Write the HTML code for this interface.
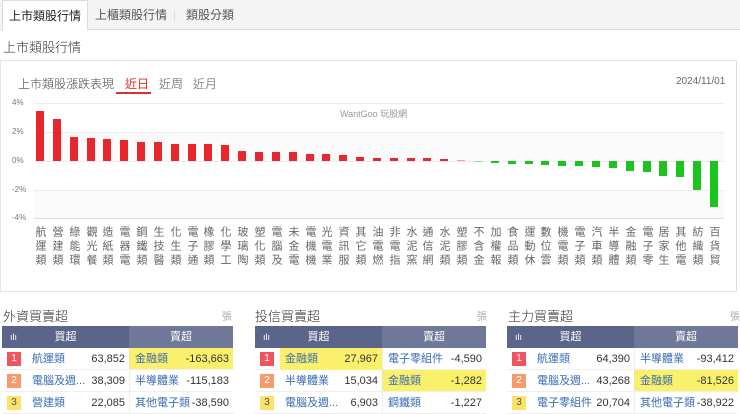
<!DOCTYPE html>
<html><head><meta charset="utf-8"><style>
*{margin:0;padding:0;box-sizing:border-box}
body{width:740px;height:409px;overflow:hidden;background:#fff;font-family:"Liberation Sans","Noto Sans CJK TC",sans-serif;color:#333;position:relative}
.a{position:absolute}
.tabs{left:0;top:0;width:740px;height:30px;background:#f4f4f4;border-bottom:1px solid #ddd}
.tab{top:0;height:30px;line-height:30px;font-size:12px;color:#555;text-align:center}
.b{position:absolute;width:8px}
.r{background:#e8262d}.g{background:#1ec41e}
.l{position:absolute;top:226px;width:14px;height:46px;overflow:hidden;writing-mode:vertical-rl;font-size:11px;line-height:14px;color:#666;letter-spacing:3px}
.grid{position:absolute;left:34px;width:690px;height:1px;background:#ececec}
.yl{position:absolute;left:12px;font-size:8px;color:#777;width:18px}
.tt{font-size:13px;color:#333;font-weight:300}
.tbl{position:absolute;top:326px;width:231px;font-size:11px}
.hd{height:22px;display:flex;color:#fff}
.hd .h1{width:127px;background:#5b6489;position:relative;text-align:center;line-height:22px}
.hd .h2{flex:1;background:#6f7899;text-align:center;line-height:22px}
.row{height:22px;display:flex;line-height:22px;border-bottom:1px solid #f0f0f0}
.bl{width:127px;position:relative}
.br{flex:1;position:relative;border-left:1px dotted #ddd}
.bd{position:absolute;left:5px;top:4px;width:14px;height:14px;line-height:14px;text-align:center;color:#fff;font-size:10px}
.nm{position:absolute;left:30px;color:#3a6db3}
.nu{position:absolute;right:4px;color:#333}
.nm2{position:absolute;left:5px;color:#3a6db3}
.y{background:#fbf06b}
</style></head><body>
<div class="a tabs"></div>
<div class="a tab" style="left:2px;width:86px;background:#fff;border:1px solid #ddd;border-bottom:none;height:31px;color:#222">上市類股行情</div>
<div class="a tab" style="left:92px;width:78px">上櫃類股行情</div>
<div class="a" style="left:174px;top:11px;width:1px;height:10px;background:#ddd"></div>
<div class="a tab" style="left:180px;width:60px">類股分類</div>
<div class="a tt" style="left:3px;top:37px;font-size:13px">上市類股行情</div>
<div class="a" style="left:0;top:60px;width:737px;height:232px;border:1px solid #e6e6e6;border-right:1px solid #ddd"></div>
<div class="a" style="left:18px;top:75px;font-size:12px;color:#444;font-weight:300">上市類股漲跌表現</div>
<div class="a" style="left:125px;top:75px;font-size:12px;color:#e02a2a">近日</div>
<div class="a" style="left:116px;top:92px;width:35px;height:2px;background:#d93030"></div>
<div class="a" style="left:159px;top:75px;font-size:12px;color:#555;font-weight:300">近周</div>
<div class="a" style="left:193px;top:75px;font-size:12px;color:#555;font-weight:300">近月</div>
<div class="a" style="left:676px;top:76px;font-size:10px;color:#666">2024/11/01</div>
<div class="a" style="left:34px;top:132px;width:690px;height:29px;background:#fafafa"></div>
<div class="a" style="left:34px;top:190px;width:690px;height:28px;background:#fafafa"></div>
<div class="grid" style="top:103px"></div><div class="grid" style="top:132px"></div><div class="grid" style="top:161px"></div><div class="grid" style="top:190px"></div><div class="grid" style="top:218px;background:#ddd"></div>
<div class="yl" style="top:98px">4%</div><div class="yl" style="top:127px">2%</div><div class="yl" style="top:156px">0%</div><div class="yl" style="top:185px">-2%</div><div class="yl" style="top:213px">-4%</div>
<div class="a" style="left:340px;top:107px;font-size:9px;color:#999">WantGoo 玩股網</div>
<div class="b r" style="left:36px;top:111px;height:50px"></div>
<div class="b r" style="left:53px;top:119px;height:42px"></div>
<div class="b r" style="left:70px;top:137px;height:24px"></div>
<div class="b r" style="left:87px;top:138px;height:23px"></div>
<div class="b r" style="left:103px;top:139px;height:22px"></div>
<div class="b r" style="left:120px;top:140px;height:21px"></div>
<div class="b r" style="left:137px;top:142px;height:19px"></div>
<div class="b r" style="left:154px;top:142px;height:19px"></div>
<div class="b r" style="left:171px;top:144px;height:17px"></div>
<div class="b r" style="left:188px;top:144px;height:17px"></div>
<div class="b r" style="left:204px;top:144px;height:17px"></div>
<div class="b r" style="left:221px;top:145px;height:16px"></div>
<div class="b r" style="left:238px;top:151px;height:10px"></div>
<div class="b r" style="left:255px;top:152px;height:9px"></div>
<div class="b r" style="left:272px;top:152px;height:9px"></div>
<div class="b r" style="left:289px;top:152px;height:9px"></div>
<div class="b r" style="left:306px;top:154px;height:7px"></div>
<div class="b r" style="left:322px;top:154px;height:7px"></div>
<div class="b r" style="left:339px;top:155px;height:6px"></div>
<div class="b r" style="left:356px;top:157px;height:4px"></div>
<div class="b r" style="left:373px;top:158px;height:3px"></div>
<div class="b r" style="left:390px;top:158px;height:3px"></div>
<div class="b r" style="left:407px;top:158px;height:3px"></div>
<div class="b r" style="left:423px;top:158px;height:3px"></div>
<div class="b r" style="left:440px;top:159px;height:2px"></div>
<div class="b" style="left:457px;top:160px;height:1px;background:#f3a0a0"></div>
<div class="b" style="left:474px;top:161px;height:1px;background:#8fe08f"></div>
<div class="b g" style="left:491px;top:161px;height:1.5px"></div>
<div class="b g" style="left:508px;top:161px;height:3px"></div>
<div class="b g" style="left:525px;top:161px;height:3px"></div>
<div class="b g" style="left:541px;top:161px;height:4px"></div>
<div class="b g" style="left:558px;top:161px;height:5px"></div>
<div class="b g" style="left:575px;top:161px;height:5px"></div>
<div class="b g" style="left:592px;top:161px;height:6px"></div>
<div class="b g" style="left:609px;top:161px;height:7px"></div>
<div class="b g" style="left:626px;top:161px;height:10px"></div>
<div class="b g" style="left:643px;top:161px;height:11px"></div>
<div class="b g" style="left:659px;top:161px;height:15px"></div>
<div class="b g" style="left:676px;top:161px;height:16px"></div>
<div class="b g" style="left:693px;top:161px;height:29px"></div>
<div class="b g" style="left:710px;top:161px;height:46px"></div>
<div class="l" style="left:33px">航運類</div>
<div class="l" style="left:50px">營建類</div>
<div class="l" style="left:67px">綠能環保</div>
<div class="l" style="left:84px">觀光餐旅</div>
<div class="l" style="left:100px">造紙類</div>
<div class="l" style="left:117px">電器電纜</div>
<div class="l" style="left:134px">鋼鐵類</div>
<div class="l" style="left:151px">生技醫療業</div>
<div class="l" style="left:168px">化生類</div>
<div class="l" style="left:185px">電子通路類</div>
<div class="l" style="left:201px">橡膠類</div>
<div class="l" style="left:218px">化學工業</div>
<div class="l" style="left:235px">玻璃陶瓷</div>
<div class="l" style="left:252px">塑化類</div>
<div class="l" style="left:269px">電腦及週邊設</div>
<div class="l" style="left:286px">未金電</div>
<div class="l" style="left:303px">電機機械</div>
<div class="l" style="left:319px">光電業</div>
<div class="l" style="left:336px">資訊服務類</div>
<div class="l" style="left:353px">其它類</div>
<div class="l" style="left:370px">油電燃氣類</div>
<div class="l" style="left:387px">非電指</div>
<div class="l" style="left:404px">水泥窯類</div>
<div class="l" style="left:420px">通信網路業</div>
<div class="l" style="left:437px">水泥類</div>
<div class="l" style="left:454px">塑膠類</div>
<div class="l" style="left:471px">不含金融</div>
<div class="l" style="left:488px">加權報酬指</div>
<div class="l" style="left:505px">食品類</div>
<div class="l" style="left:522px">運動休閒</div>
<div class="l" style="left:538px">數位雲端</div>
<div class="l" style="left:555px">機電類</div>
<div class="l" style="left:572px">電子類</div>
<div class="l" style="left:589px">汽車類</div>
<div class="l" style="left:606px">半導體業</div>
<div class="l" style="left:623px">金融類</div>
<div class="l" style="left:640px">電子零組件</div>
<div class="l" style="left:656px">居家生活</div>
<div class="l" style="left:673px">其他電子類</div>
<div class="l" style="left:690px">紡織類</div>
<div class="l" style="left:707px">百貨貿易</div>

<div class="a tt" style="left:3px;top:306px">外資買賣超</div><div class="a" style="left:222px;top:308px;font-size:10px;color:#aaa">張</div>
<div class="a tt" style="left:255px;top:306px">投信買賣超</div><div class="a" style="left:477px;top:308px;font-size:10px;color:#aaa">張</div>
<div class="a tt" style="left:508px;top:306px">主力買賣超</div><div class="a" style="left:730px;top:308px;font-size:10px;color:#aaa">張</div>

<div class="tbl" style="left:2px">
<div class="hd"><div class="h1"><span style="position:absolute;left:8px;font-size:9px">ılı</span>買超</div><div class="h2">賣超</div></div>
<div class="row"><div class="bl"><span class="bd" style="background:#f0545c">1</span><span class="nm">航運類</span><span class="nu">63,852</span></div><div class="br y"><span class="nm2">金融類</span><span class="nu">-163,663</span></div></div>
<div class="row"><div class="bl"><span class="bd" style="background:#f59b6e">2</span><span class="nm">電腦及週...</span><span class="nu">38,309</span></div><div class="br"><span class="nm2">半導體業</span><span class="nu">-115,183</span></div></div>
<div class="row"><div class="bl"><span class="bd" style="background:#fde26a;color:#555">3</span><span class="nm">營建類</span><span class="nu">22,085</span></div><div class="br"><span class="nm2">其他電子類</span><span class="nu">-38,590</span></div></div>
</div>
<div class="tbl" style="left:255px">
<div class="hd"><div class="h1"><span style="position:absolute;left:8px;font-size:9px">ılı</span>買超</div><div class="h2">賣超</div></div>
<div class="row"><div class="bl"><span class="bd" style="background:#f0545c">1</span><span class="a y" style="left:25px;top:0;width:102px;height:22px"></span><span class="nm">金融類</span><span class="nu">27,967</span></div><div class="br"><span class="nm2">電子零組件</span><span class="nu">-4,590</span></div></div>
<div class="row"><div class="bl"><span class="bd" style="background:#f59b6e">2</span><span class="nm">半導體業</span><span class="nu">15,034</span></div><div class="br y"><span class="nm2">金融類</span><span class="nu">-1,282</span></div></div>
<div class="row"><div class="bl"><span class="bd" style="background:#fde26a;color:#555">3</span><span class="nm">電腦及週...</span><span class="nu">6,903</span></div><div class="br"><span class="nm2">鋼鐵類</span><span class="nu">-1,227</span></div></div>
</div>
<div class="tbl" style="left:507px">
<div class="hd"><div class="h1"><span style="position:absolute;left:8px;font-size:9px">ılı</span>買超</div><div class="h2">賣超</div></div>
<div class="row"><div class="bl"><span class="bd" style="background:#f0545c">1</span><span class="nm">航運類</span><span class="nu">64,390</span></div><div class="br"><span class="nm2">半導體業</span><span class="nu">-93,412</span></div></div>
<div class="row"><div class="bl"><span class="bd" style="background:#f59b6e">2</span><span class="nm">電腦及週...</span><span class="nu">43,268</span></div><div class="br y"><span class="nm2">金融類</span><span class="nu">-81,526</span></div></div>
<div class="row"><div class="bl"><span class="bd" style="background:#fde26a;color:#555">3</span><span class="nm">電子零組件</span><span class="nu">20,704</span></div><div class="br"><span class="nm2">其他電子類</span><span class="nu">-38,922</span></div></div>
</div>
</body></html>
